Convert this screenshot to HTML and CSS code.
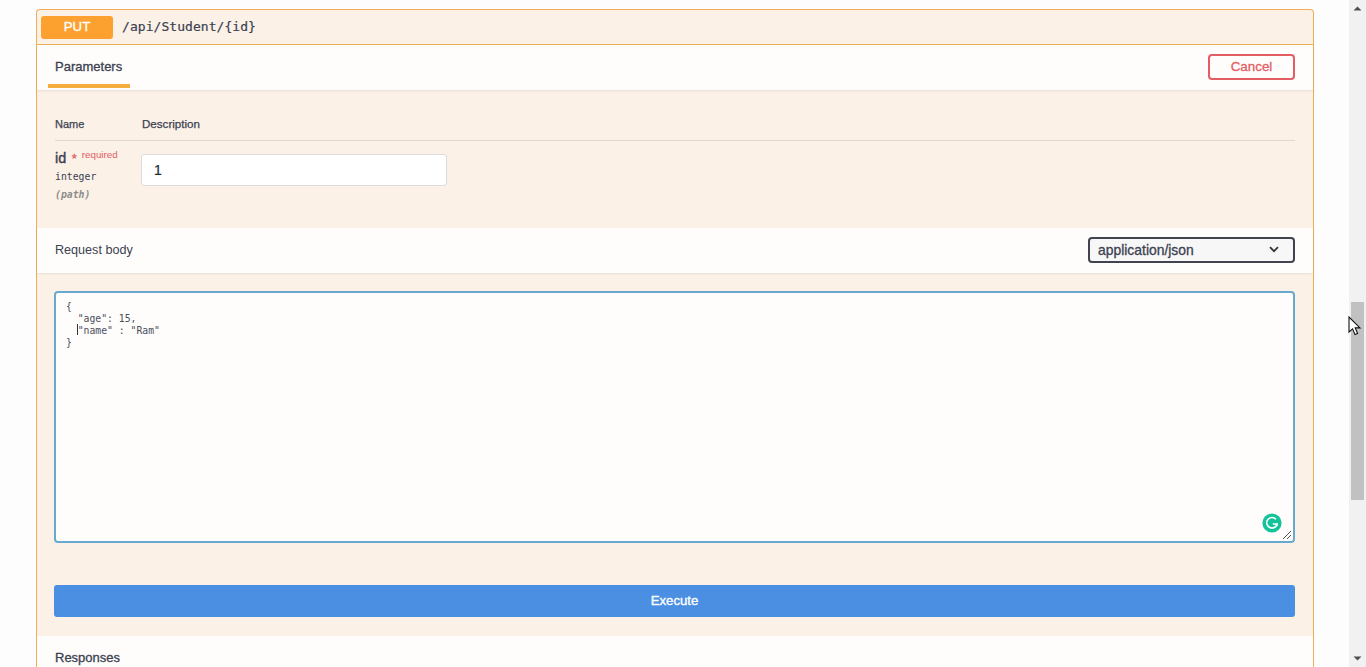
FILE: index.html
```html
<!DOCTYPE html>
<html lang="en">
<head>
<meta charset="utf-8">
<title>Swagger UI</title>
<link rel="stylesheet" href="styles.css">
</head>
<body>
<div class="viewport">
  <main class="page">
    <section class="opblock">
      <header class="summary">
        <span class="method">PUT</span>
        <span class="path">/api/Student/{id}</span>
      </header>
      <div class="section-head tabs-head">
        <div class="tab">Parameters</div>
        <button class="cancel" type="button">Cancel</button>
      </div>
      <div class="params">
        <div class="param-grid param-titles">
          <div>Name</div>
          <div>Description</div>
        </div>
        <div class="param-grid param-row">
          <div class="param-name">
            <div class="name-line"><span class="id">id</span> <span class="star">*</span><span class="req">required</span></div>
            <div class="type">integer</div>
            <div class="loc">(path)</div>
          </div>
          <div class="input-box">1</div>
        </div>
      </div>
      <div class="section-head body-head">
        <div class="body-title">Request body</div>
        <div class="select">
          <span>application/json</span>
          <svg width="10" height="7" viewBox="0 0 10 7" aria-hidden="true"><path d="M1 1.2 5 5.2 9 1.2" fill="none" stroke="#333" stroke-width="1.7"/></svg>
        </div>
      </div>
      <div class="editor-wrap">
        <div class="editor">
          <pre class="code">{
  "age": 15,
  "name" : "Ram"
}</pre>
          <span class="caret"></span>
          <svg class="grammarly" width="20" height="20" viewBox="0 0 20 20" aria-hidden="true"><circle cx="10" cy="10" r="9.6" fill="#15c39a"/><path d="M14 6.2A5.3 5.3 0 1 0 15.2 11H10.8" fill="none" stroke="#fff" stroke-width="1.5"/><path d="M13.4 11 15.4 13" fill="none" stroke="#fff" stroke-width="1.3"/></svg>
          <svg class="grip" width="10" height="10" viewBox="0 0 10 10" aria-hidden="true"><path d="M1 9 9 1M5 9 9 5" stroke="#555" stroke-width="1"/></svg>
        </div>
      </div>
      <div class="exec-wrap">
        <button class="execute" type="button">Execute</button>
      </div>
      <div class="section-head resp-head">Responses</div>
    </section>
  </main>
  <aside class="scrollbar">
    <svg class="arrow" width="17" height="17" viewBox="0 0 17 17" aria-hidden="true"><path d="M4.5 10.5 8.5 6.5 12.5 10.5Z" fill="#505050"/></svg>
    <div class="track"><div class="thumb"></div></div>
    <svg class="arrow" width="17" height="17" viewBox="0 0 17 17" aria-hidden="true"><path d="M4.5 6.5 8.5 10.5 12.5 6.5Z" fill="#505050"/></svg>
    <svg class="cursor" width="14" height="21" viewBox="0 0 14 21" aria-hidden="true"><path d="M1 1V16L4.6 12.8 7 18.6 9.6 17.5 7.2 11.9H12Z" fill="#fff" stroke="#111" stroke-width="1.1"/></svg>
  </aside>
</div>
</body>
</html>
```
FILE: styles.css
```css
* { box-sizing: border-box; }
html, body { margin: 0; padding: 0; height: 100%; overflow: hidden; }
body { font-family: "Liberation Sans", Arial, sans-serif; color: #3b4151; background: #fdfdfd; }
.viewport { display: flex; height: 667px; overflow: hidden; }
.page { flex: 1; min-width: 0; padding: 9px 35px 0 36px; }
.opblock { border: 1px solid #f0ac58; border-bottom: 0; border-radius: 4px 4px 0 0; background: #fbf1e7; }
.summary { display: flex; align-items: center; height: 35px; padding: 0 4px; border-bottom: 1px solid #ecb257; }
.method { width: 72px; height: 23px; margin-right: 9px; border-radius: 3px; background: #fca130; color: #fff; font-size: 13.2px; line-height: 21px; text-align: center; -webkit-text-stroke: .35px #fff; }
.path { font-family: "DejaVu Sans Mono", monospace; font-size: 13px; letter-spacing: .05px; color: #3b4151; -webkit-text-stroke: .2px #3b4151; position: relative; top: -1px; }
.section-head { display: flex; align-items: center; justify-content: space-between; background: #fffdfb; box-shadow: 0 1px 2px rgba(0,0,0,.08); }
.tabs-head { height: 45px; padding: 0 18px 0 11px; }
.tab { align-self: stretch; width: 82px; padding: 14px 0 0 7px; font-size: 13px; color: #3b4151; -webkit-text-stroke: .3px #3b4151; border-bottom: 4px solid #f5ad3d; margin-bottom: 2px; white-space: nowrap; }
.cancel { width: 87px; height: 26px; padding: 0 0 2px; border: 2px solid #e35d65; border-radius: 4px; background: #fffdfb; color: #e35d65; font: 400 13.4px "Liberation Sans", Arial, sans-serif; -webkit-text-stroke: .3px #e35d65; margin-top: -1px; }
.params { height: 138px; padding: 27px 18px 0 18px; }
.param-grid { display: grid; grid-template-columns: 86px 1fr; }
.param-titles { height: 24px; font-size: 11px; line-height: 15px; border-bottom: 1px solid #e0d8d0; -webkit-text-stroke: .25px #3b4151; }
.param-titles div:last-child { padding-left: 1px; font-size: 11.6px; line-height: 13px; }
.param-row { padding-top: 7px; }
.name-line { line-height: 20px; white-space: nowrap; }
.id { font-size: 14.4px; -webkit-text-stroke: .4px #3b4151; }
.star { color: #e35d65; font-size: 13px; margin-left: 1px; -webkit-text-stroke: .3px #e35d65; }
.req { color: #e35d65; font-size: 9.8px; margin-left: 5px; position: relative; top: -5px; }
.type { font-family: "DejaVu Sans Mono", monospace; font-size: 9.8px; margin-top: -1px; line-height: 15px; }
.loc { font-family: "DejaVu Sans Mono", monospace; font-size: 9.8px; font-style: italic; font-weight: 700; color: #8d8d8d; margin-top: 3px; line-height: 15px; }
.input-box { width: 306px; height: 32px; margin-top: 6px; padding: 0 12px; border: 1px solid #dcdcdc; border-radius: 3px; background: #fff; color: #1f2a2a; font-size: 14px; line-height: 30px; -webkit-text-stroke: .2px #1f2a2a; }
.body-head { height: 45px; padding: 0 18px; }
.body-title { font-size: 12.6px; color: #3b4151; position: relative; top: -1px; }
.select { display: flex; align-items: center; justify-content: space-between; width: 207px; height: 26px; padding: 0 14px 0 8px; border: 2px solid #41444e; border-radius: 4px; background: #f7f7f7; font-size: 13.9px; color: #3b4151; -webkit-text-stroke: .3px #3b4151; margin-top: -2px; }
.editor-wrap { padding: 18px 18px 0 17px; }
.editor { position: relative; height: 252px; border: 2px solid #68a9d0; border-radius: 4px; background: #fffdfb; padding: 8px 10px; }
.code { margin: 0; font-family: "DejaVu Sans Mono", monospace; font-size: 9.75px; line-height: 12px; color: #4a4f5c; }
.caret { position: absolute; left: 21px; top: 31px; width: 1px; height: 11px; background: #333; }
.grammarly { position: absolute; right: 11px; bottom: 8px; }
.grip { position: absolute; right: 1px; bottom: 1px; }
.exec-wrap { height: 93px; padding: 42px 18px 0 17px; }
.execute { display: block; width: 100%; height: 32px; padding: 0 0 2px; border: 0; border-radius: 3px; background: #4a8fe2; color: #fff; font: 400 13.2px "Liberation Sans", Arial, sans-serif; -webkit-text-stroke: .35px #fff; }
.resp-head { height: 60px; padding: 14px 18px 0; align-items: flex-start; font-size: 13px; -webkit-text-stroke: .3px #3b4151; box-shadow: none; }
.scrollbar { position: relative; display: flex; flex-direction: column; width: 17px; background: #f1f1f1; }
.arrow { flex: none; }
.track { flex: 1; padding: 285px 2px 0; }
.thumb { height: 198px; background: #c1c1c1; }
.cursor { position: absolute; left: -1px; top: 316px; }
```
